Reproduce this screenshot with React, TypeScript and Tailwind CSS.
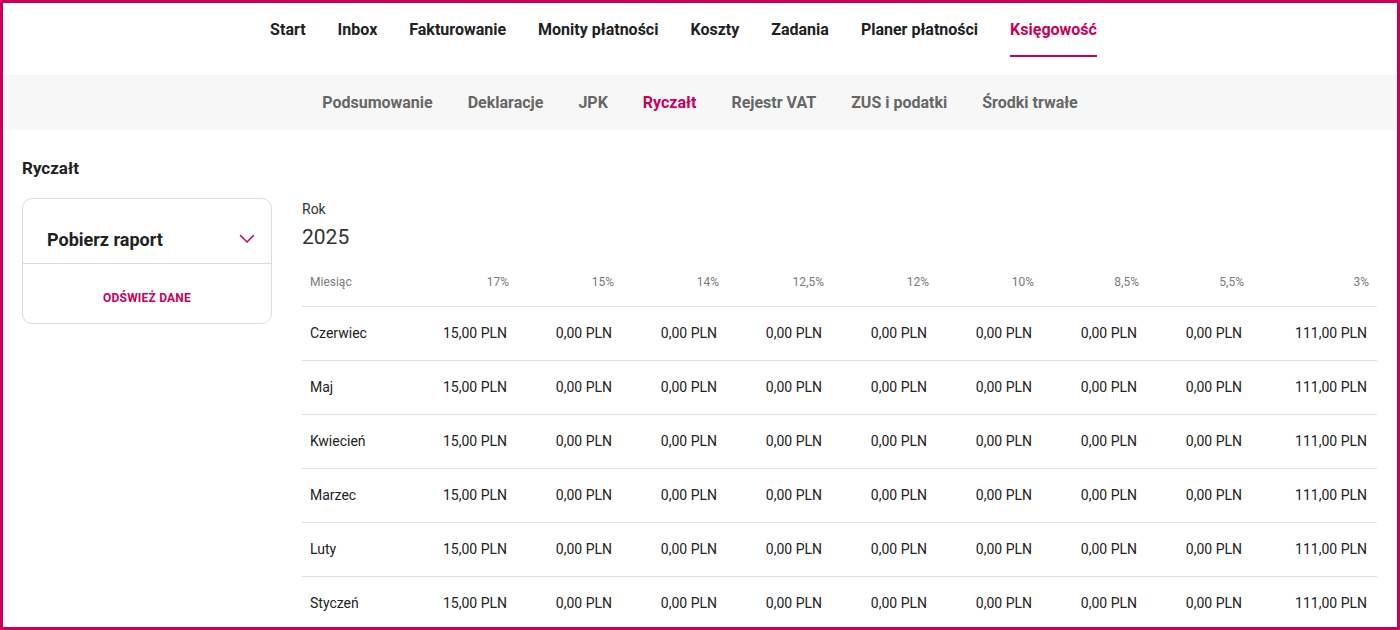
import React from "react";

const mainNav = ["Start", "Inbox", "Fakturowanie", "Monity płatności", "Koszty", "Zadania", "Planer płatności", "Księgowość"];
const subNav = ["Podsumowanie", "Deklaracje", "JPK", "Ryczałt", "Rejestr VAT", "ZUS i podatki", "Środki trwałe"];
const rates = ["17%", "15%", "14%", "12,5%", "12%", "10%", "8,5%", "5,5%", "3%"];
const months = ["Czerwiec", "Maj", "Kwiecień", "Marzec", "Luty", "Styczeń"];
const values = ["15,00 PLN", "0,00 PLN", "0,00 PLN", "0,00 PLN", "0,00 PLN", "0,00 PLN", "0,00 PLN", "0,00 PLN", "111,00 PLN"];

const App: React.FC = () => {
    return (
        <div
            className="h-[630px] w-[1400px] overflow-hidden border-[3px] border-[#c8005a] bg-white text-[#212121]"
            style={{ fontFamily: "Roboto, 'Liberation Sans', sans-serif" }}
        >
            {/* main navigation */}
            <nav className="flex h-[72px] justify-center gap-[32px] pr-[33px]">
                {mainNav.map((item) => {
                    const active = item === "Księgowość";
                    return (
                        <a
                            key={item}
                            className={`flex h-[54px] items-center border-b-2 pt-[2px] text-[16px] font-bold ${
                                active ? "border-[#c8005a] text-[#c8005a]" : "border-transparent text-[#212121]"
                            }`}
                        >
                            {item}
                        </a>
                    );
                })}
            </nav>

            {/* sub navigation */}
            <nav className="flex h-[55px] items-center justify-center gap-[35px] bg-[#f7f7f7]">
                {subNav.map((item) => (
                    <a
                        key={item}
                        className={`text-[16px] font-bold ${item === "Ryczałt" ? "text-[#c8005a]" : "text-[#666666]"}`}
                    >
                        {item}
                    </a>
                ))}
            </nav>

            <div className="px-[19px] pt-[27px]">
                <h1 className="text-[17px] font-bold leading-[22px]">Ryczałt</h1>

                <div className="mt-[19px] flex gap-[30px]">
                    {/* left card */}
                    <div className="h-[126px] w-[250px] shrink-0 rounded-[10px] border border-[#dcdcdc]">
                        <div className="flex h-[65px] items-center justify-between border-b border-[#dcdcdc] pl-[24px] pr-[16px]">
                            <span className="pt-[16px] text-[18px] font-bold">Pobierz raport</span>
                            <svg width="16" height="10" viewBox="0 0 16 10" className="mt-[15px]" fill="none">
                                <path d="M1.5 1.5 L8 8 L14.5 1.5" stroke="#c8005a" strokeWidth="1.5" strokeLinecap="round" strokeLinejoin="round" />
                            </svg>
                        </div>
                        <div className="flex h-[59px] items-center justify-center pt-[8px]">
                            <button className="text-[12px] font-bold tracking-[0.2px] text-[#c8005a]">ODŚWIEŻ DANE</button>
                        </div>
                    </div>

                    {/* table area */}
                    <div className="flex-1 pr-[1px]">
                        <div className="pt-[2px] text-[14px] leading-[18px] text-[#333]">Rok</div>
                        <div className="mt-[6px] text-[21px] leading-[26px] text-[#333]">2025</div>

                        <div className="mt-[11px]">
                            <div className="grid h-[46px] grid-cols-[110px_repeat(8,105px)_1fr] items-center border-b border-[#e0e0e0] pb-[4px] text-[12px] text-[#7a7a7a]">
                                <div className="pl-[8px]">Miesiąc</div>
                                {rates.map((r) => (
                                    <div key={r} className="pr-[8px] text-right">{r}</div>
                                ))}
                            </div>
                            {months.map((m) => (
                                <div
                                    key={m}
                                    className="grid h-[54px] grid-cols-[110px_repeat(8,105px)_1fr] items-center border-b border-[#e0e0e0] text-[14px] text-[#212121]"
                                >
                                    <div className="pl-[8px]">{m}</div>
                                    {values.map((v, i) => (
                                        <div key={i} className="pr-[10px] text-right">{v}</div>
                                    ))}
                                </div>
                            ))}
                        </div>
                    </div>
                </div>
            </div>
        </div>
    );
};

export default App;
